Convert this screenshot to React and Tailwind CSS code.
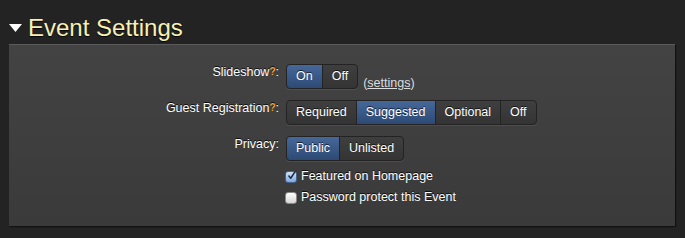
import React from "react";

const font = { fontFamily: '"Liberation Sans", Arial, Helvetica, sans-serif' };

function Seg({ items, active }) {
  return (
    <div className="flex h-[25px] rounded-[4px] shadow-[0_1px_0_rgba(255,255,255,0.08)]">
      {items.map((it, i) => {
        const on = i === active;
        const first = i === 0;
        const last = i === items.length - 1;
        return (
          <div
            key={it}
            className={
              "flex items-center justify-center px-[9px] text-[12.5px] text-white border border-[#232323] [text-shadow:0_-1px_0_rgba(0,0,0,0.7)] " +
              (first ? "rounded-l-[4px] " : "-ml-px ") +
              (last ? "rounded-r-[4px] " : "") +
              (on
                ? "bg-gradient-to-b from-[#46689a] to-[#2d4a74] border-[#1f2f47] z-10"
                : "bg-gradient-to-b from-[#3f3f3f] to-[#343434]")
            }
          >
            {it}
          </div>
        );
      })}
    </div>
  );
}

function Label({ children, q }) {
  return (
    <div className="w-[277px] pr-[7px] text-right text-[12.5px] leading-[16px] text-white [text-shadow:0_-1px_0_rgba(0,0,0,0.8)]">
      {children}
      {q && <sup className="text-[#e8a33a] text-[10px] font-bold relative -top-[1px]">?</sup>}
      :
    </div>
  );
}

function Check({ checked, children }) {
  return (
    <div className="flex items-center gap-[4px] h-[21px]">
      <div
        className={
          "w-[12px] h-[12px] rounded-[3px] flex items-center justify-center border " +
          (checked
            ? "bg-gradient-to-b from-[#cfe2f8] to-[#7fa9e0] border-[#45638f]"
            : "bg-gradient-to-b from-[#ffffff] to-[#d6d6d6] border-[#8a8a8a]")
        }
      >
        {checked && (
          <svg width="12" height="12" viewBox="0 0 12 12" className="-mt-[2px] ml-[1px]">
            <path d="M2.5 6 L5 9 L10.5 0.5" fill="none" stroke="#1b2b44" strokeWidth="2" strokeLinecap="round" strokeLinejoin="round" />
          </svg>
        )}
      </div>
      <span className="text-[12.5px] text-white [text-shadow:0_-1px_0_rgba(0,0,0,0.8)]">{children}</span>
    </div>
  );
}

export default function App() {
  return (
    <div style={font} className="w-[685px] h-[238px] bg-[#232323] overflow-hidden">
      <div className="flex items-center h-[44px] pl-[9px] pt-[11px]">
        <svg width="13" height="8" viewBox="0 0 13 8" className="mt-[1px]">
          <polygon points="0,0 13,0 6.5,8" fill="#ffffff" />
        </svg>
        <span className="ml-[6px] text-[24px] text-[#f8f0b4] [text-shadow:0_1px_1px_rgba(0,0,0,0.9)] leading-none">
          Event Settings
        </span>
      </div>
      <div className="ml-[9px] w-[666px] h-[182px] bg-gradient-to-b from-[#434343] to-[#3a3a3a] border-t border-[#5a5a5a] shadow-[1px_1px_1px_rgba(0,0,0,0.5)] pt-[19px] flex flex-col">
        <div className="flex items-start h-[36px]">
          <Label q>Slideshow</Label>
          <Seg items={["On", "Off"]} active={0} />
          <span className="ml-[5px] mt-[10px] text-[12.5px] text-[#dddddd]">
            (<span className="underline">settings</span>)
          </span>
        </div>
        <div className="flex items-start h-[36px]">
          <Label q>Guest Registration</Label>
          <Seg items={["Required", "Suggested", "Optional", "Off"]} active={1} />
        </div>
        <div className="flex items-start h-[30px]">
          <Label>Privacy</Label>
          <Seg items={["Public", "Unlisted"]} active={0} />
        </div>
        <div className="pl-[276px] flex flex-col">
          <Check checked>Featured on Homepage</Check>
          <Check>Password protect this Event</Check>
        </div>
      </div>
    </div>
  );
}
